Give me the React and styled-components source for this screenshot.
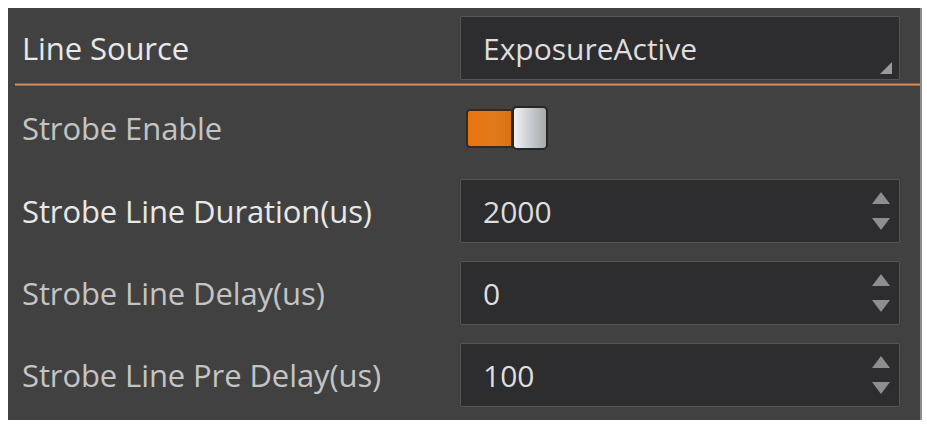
import React from "react";
import styled, { createGlobalStyle } from "styled-components";

const GlobalStyle = createGlobalStyle`
  html, body {
    margin: 0;
    padding: 0;
    background: #ffffff;
  }
  body {
    padding: 8px 5px 7px 8px;
    font-family: "Open Sans", "Noto Sans", sans-serif;
  }
`;

const Panel = styled.div`
  width: 914px;
  height: 412px;
  box-sizing: border-box;
  background: #414141;
  border-right: 2px solid #8c8c8c;
  display: flex;
  flex-direction: column;
`;

const Row = styled.div`
  display: grid;
  grid-template-columns: 452px 440px;
  align-items: center;
  height: ${(p) => p.h}px;
  box-sizing: border-box;
  padding-top: ${(p) => p.pt || 0}px;
`;

const Label = styled.div`
  padding-left: 14px;
  font-size: 31px;
  color: ${(p) => (p.bright ? "#e8e8e8" : "#c4c4c4")};
  letter-spacing: -0.1px;
  white-space: nowrap;
`;

const Field = styled.div`
  position: relative;
  height: 64px;
  box-sizing: border-box;
  background: #2d2d2f;
  border: 1px solid #555556;
  border-radius: 2px;
  display: flex;
  align-items: center;
  padding-left: 22px;
  font-size: 30px;
  color: #dedede;
`;

const Divider = styled.div`
  height: 3px;
  margin-left: 7px;
  background: linear-gradient(#7a4420, #d68e55 50%, #84502c);
`;

const DropMark = styled.div`
  position: absolute;
  right: 7px;
  bottom: 5px;
  width: 0;
  height: 0;
  border-left: 12px solid transparent;
  border-bottom: 12px solid #9a9a9a;
`;

const Spin = styled.div`
  position: absolute;
  right: 9px;
  top: 0;
  bottom: 0;
  display: flex;
  flex-direction: column;
  justify-content: center;
  gap: 14px;
`;

const Arrow = styled.div`
  width: 0;
  height: 0;
  border-left: 9px solid transparent;
  border-right: 9px solid transparent;
  ${(p) =>
    p.up
      ? "border-bottom: 12px solid #8e8e8e;"
      : "border-top: 12px solid #8e8e8e;"}
`;

const Toggle = styled.div`
  display: flex;
  align-items: center;
  margin-left: 6px;
`;

const ToggleTrack = styled.div`
  width: 47px;
  height: 39px;
  box-sizing: border-box;
  background: linear-gradient(90deg, #e8740e, #e27a1c 60%, #d77312);
  border: 2px solid #3a2818;
  border-radius: 4px 0 0 4px;
`;

const ToggleKnob = styled.div`
  width: 36px;
  height: 44px;
  box-sizing: border-box;
  background: linear-gradient(90deg, #f2f2f2, #c8ccd2 50%, #a8a8a8);
  border: 2px solid #262626;
  border-radius: 5px;
  margin-left: -1px;
`;

const NumberField = ({ value }) => (
  <Field>
    {value}
    <Spin>
      <Arrow up />
      <Arrow />
    </Spin>
  </Field>
);

export default function App() {
  return (
    <>
      <GlobalStyle />
      <Panel>
        <Row h={75} pt={5}>
          <Label bright>Line Source</Label>
          <Field>
            ExposureActive
            <DropMark />
          </Field>
        </Row>
        <Divider />
        <Row h={84}>
          <Label>Strobe Enable</Label>
          <Toggle>
            <ToggleTrack />
            <ToggleKnob />
          </Toggle>
        </Row>
        <Row h={82}>
          <Label bright>Strobe Line Duration(us)</Label>
          <NumberField value="2000" />
        </Row>
        <Row h={82}>
          <Label>Strobe Line Delay(us)</Label>
          <NumberField value="0" />
        </Row>
        <Row h={82}>
          <Label>Strobe Line Pre Delay(us)</Label>
          <NumberField value="100" />
        </Row>
      </Panel>
    </>
  );
}
